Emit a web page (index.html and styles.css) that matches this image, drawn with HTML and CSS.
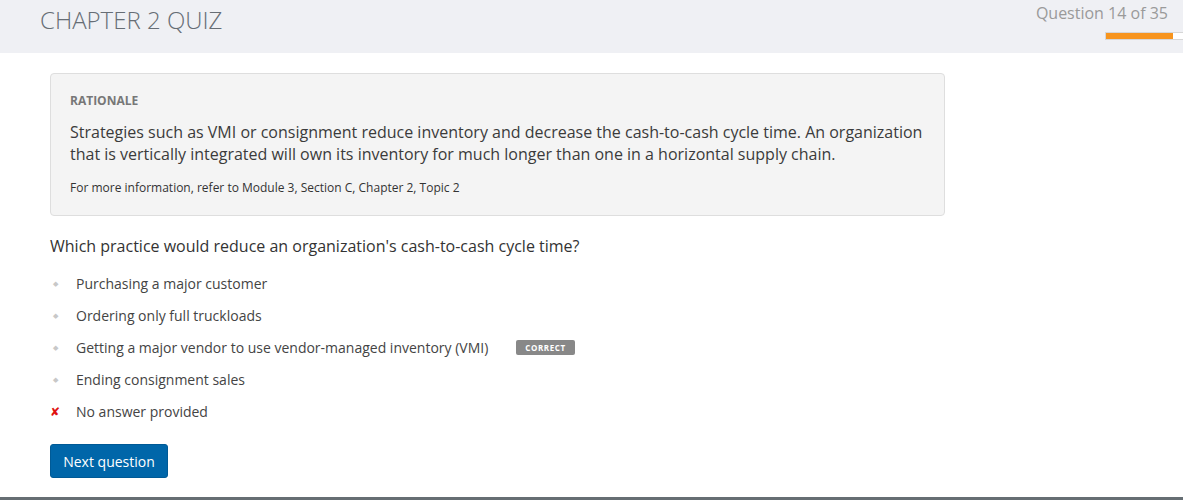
FILE: index.html
```html
<!DOCTYPE html>
<html>
<head>
<meta charset="utf-8">
<link rel="stylesheet" href="styles.css">
</head>
<body>
<header class="topbar">
  <h1 class="title">CHAPTER 2 QUIZ</h1>
  <div class="progress">
    <div class="progress-label">Question 14 of 35</div>
    <div class="progress-track"><div class="progress-fill"></div></div>
  </div>
</header>
<main class="content">
  <section class="rationale">
    <div class="rationale-head">RATIONALE</div>
    <p class="rationale-text">Strategies such as VMI or consignment reduce inventory and decrease the cash-to-cash cycle time. An organization that is vertically integrated will own its inventory for much longer than one in a horizontal supply chain.</p>
    <p class="rationale-ref">For more information, refer to Module 3, Section C, Chapter 2, Topic 2</p>
  </section>
  <h2 class="question">Which practice would reduce an organization's cash-to-cash cycle time?</h2>
  <ul class="options">
    <li class="option"><span class="mark">&#9670;</span><span>Purchasing a major customer</span></li>
    <li class="option"><span class="mark">&#9670;</span><span>Ordering only full truckloads</span></li>
    <li class="option"><span class="mark">&#9670;</span><span>Getting a major vendor to use vendor-managed inventory (VMI)</span><span class="badge">CORRECT</span></li>
    <li class="option"><span class="mark">&#9670;</span><span>Ending consignment sales</span></li>
    <li class="option"><span class="mark wrong">&#10008;</span><span>No answer provided</span></li>
  </ul>
  <button class="next">Next question</button>
</main>
<div class="bottom-line"></div>
</body>
</html>
```
FILE: styles.css
```css
* { box-sizing: border-box; }
html, body { margin: 0; padding: 0; }
body {
  font-family: "Open Sans", "Liberation Sans", sans-serif;
  color: #333;
  background: #fff;
  width: 1183px;
  height: 500px;
  overflow: hidden;
  position: relative;
}
.topbar {
  height: 53px;
  background: #eff0f4;
  display: flex;
  justify-content: space-between;
  align-items: flex-start;
  padding-left: 40px;
}
.title {
  margin: 0;
  padding-top: 3px;
  font-weight: 300;
  font-size: 24px;
  line-height: 33px;
  color: #666d75;
  letter-spacing: 0;
}
.progress {
  display: flex;
  flex-direction: column;
  align-items: flex-end;
  padding-top: 2px;
}
.progress-label {
  font-size: 16px;
  line-height: 22px;
  color: #9a9a9a;
  padding-right: 15px;
}
.progress-track {
  margin-top: 8px;
  width: 78px;
  height: 8px;
  background: #fff;
  border: 1px solid #d6d6d6;
  border-right: none;
}
.progress-fill {
  width: 67px;
  height: 100%;
  background: #f7941d;
}
.content {
  padding: 20px 0 0 50px;
}
.rationale {
  width: 895px;
  background: #f4f4f4;
  border: 1px solid #dedede;
  border-radius: 4px;
  padding: 19px 19px 19px 19px;
}
.rationale-head {
  font-size: 12px;
  font-weight: 700;
  color: #777;
  line-height: 16px;
}
.rationale-text {
  margin: 12px 0 0;
  font-size: 16px;
  line-height: 22px;
  color: #3b3b3b;
}
.rationale-ref {
  margin: 14px 0 0;
  font-size: 12px;
  line-height: 17px;
  color: #333;
}
.question {
  margin: 19px 0 0;
  font-size: 16px;
  font-weight: 400;
  line-height: 22px;
  color: #333;
}
.options {
  list-style: none;
  margin: 10px 0 0;
  padding: 0;
}
.option {
  display: flex;
  align-items: center;
  height: 32px;
  font-size: 14px;
  color: #444;
}
.mark {
  width: 26px;
  font-size: 7px;
  color: #c8c8c8;
  padding-left: 3px;
}
.mark.wrong {
  font-size: 12px;
  color: #e01010;
  padding-left: 0;
}
.badge {
  margin-left: 28px;
  background: #888;
  color: #fff;
  font-size: 8px;
  font-weight: 700;
  letter-spacing: 0.6px;
  line-height: 15px;
  padding: 0 9px;
  border-radius: 2px;
}
.next {
  display: block;
  margin-top: 17px;
  background: #0066a9;
  color: #fff;
  border: 1px solid #005a96;
  border-radius: 3px;
  font-family: "Open Sans", "Liberation Sans", sans-serif;
  font-size: 14px;
  padding: 0 12px;
  height: 34px;
  width: 118px;
  cursor: pointer;
}
.bottom-line {
  position: absolute;
  left: 0;
  right: 0;
  bottom: 0;
  height: 3px;
  background: #666e73;
}
```
